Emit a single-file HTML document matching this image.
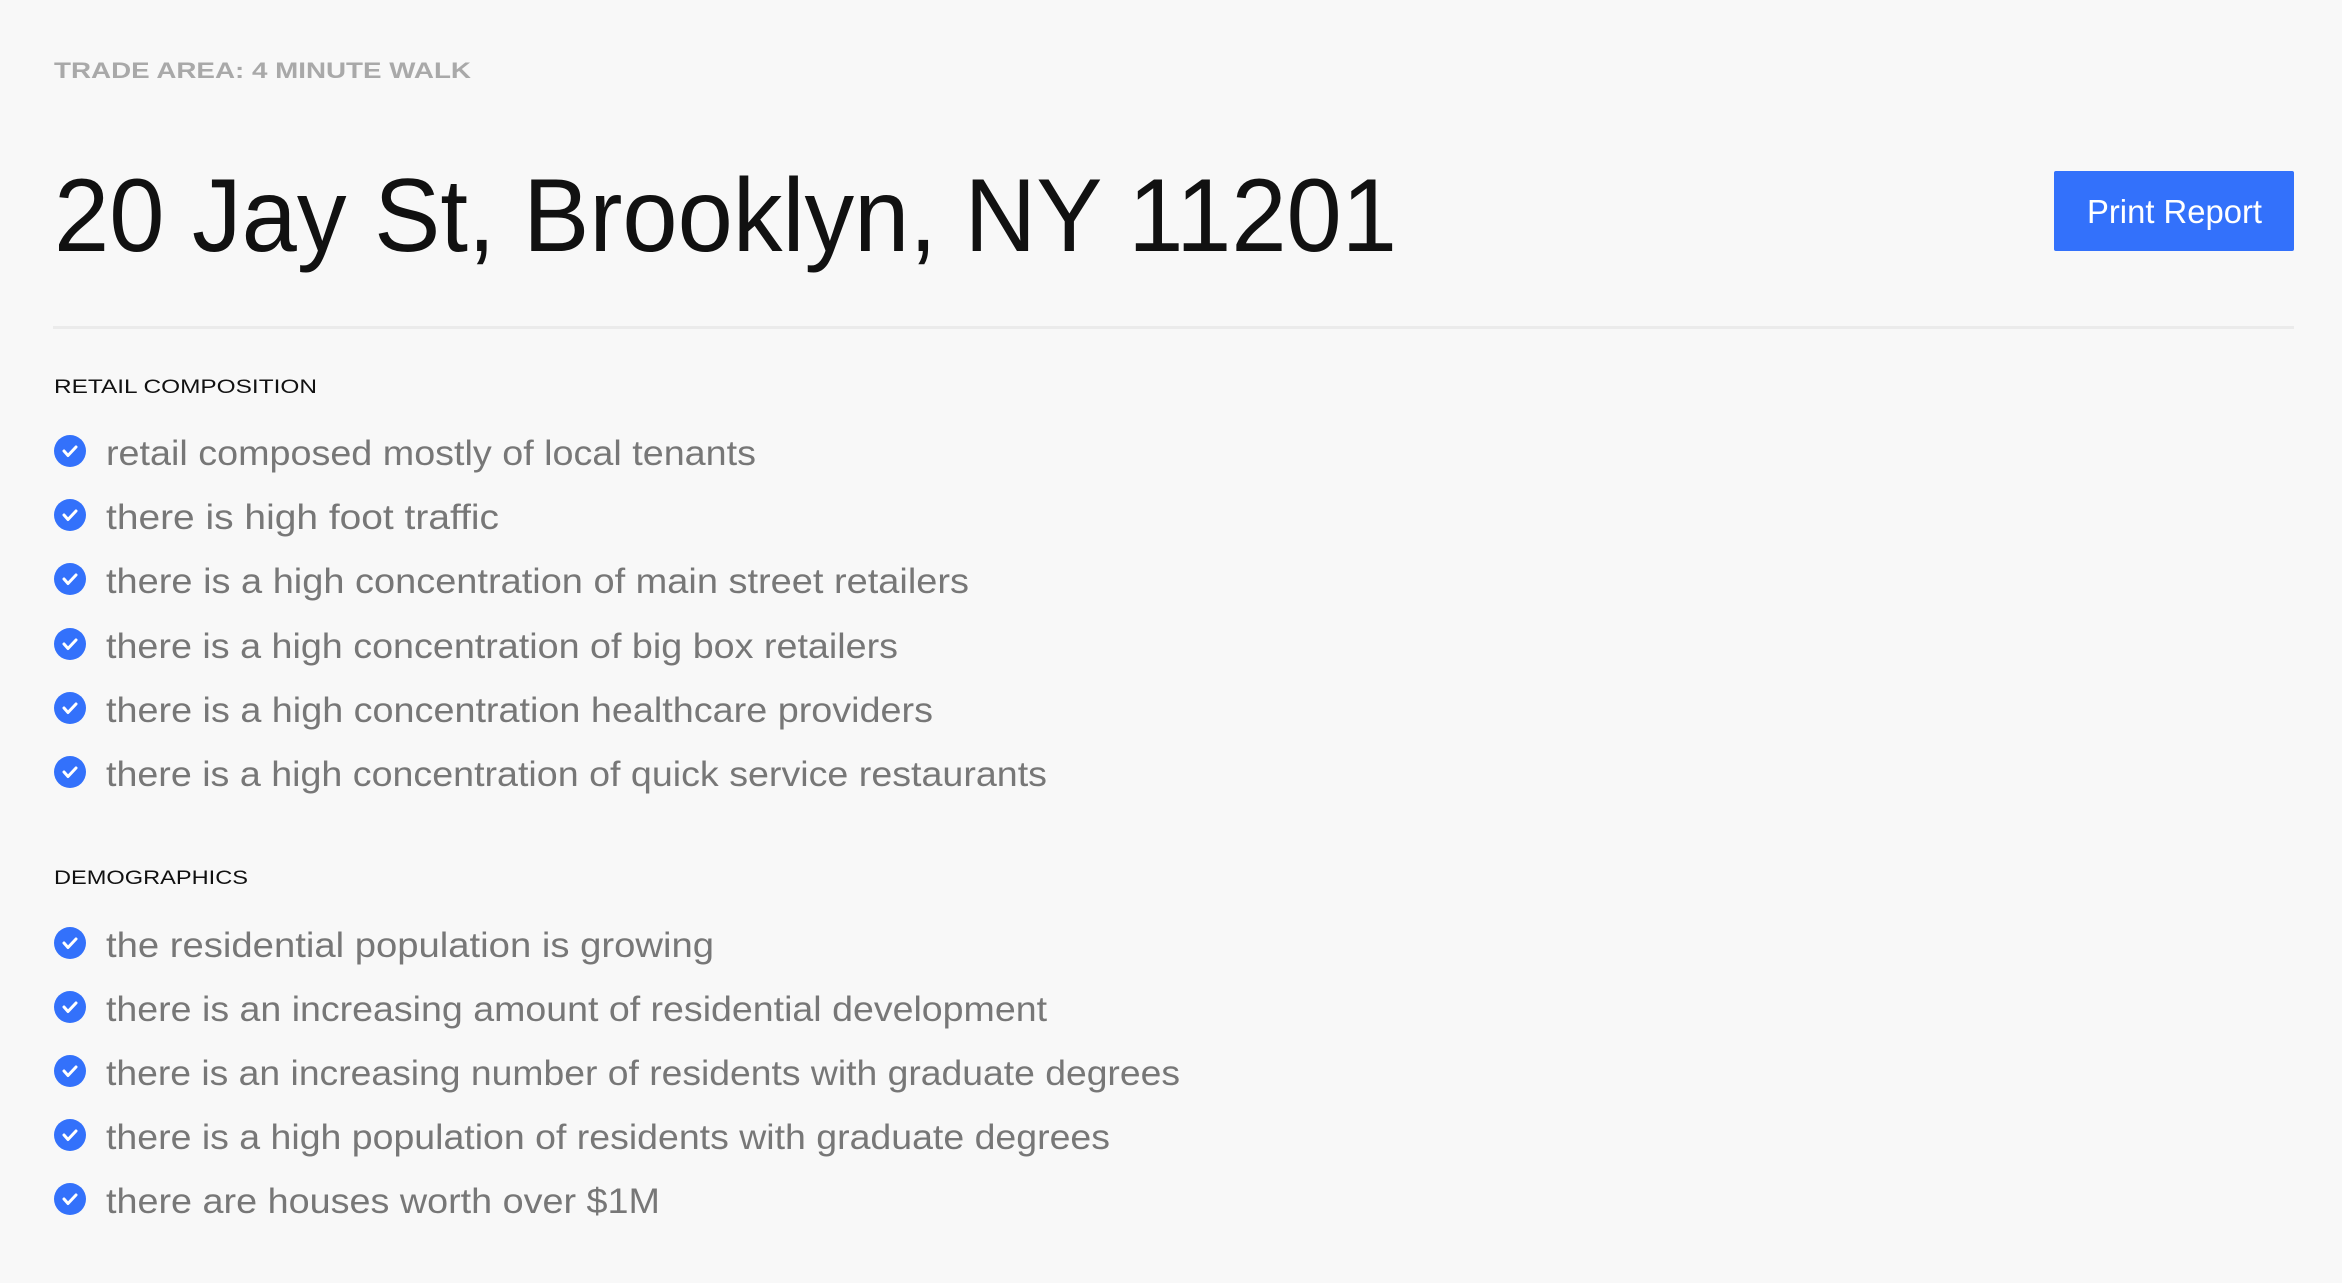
<!DOCTYPE html>
<html><head><meta charset="utf-8"><style>
html,body{margin:0;padding:0;background:#f8f8f8;width:2342px;height:1283px;overflow:hidden}
svg{display:block}
</style></head><body>
<svg width="2342" height="1283" viewBox="0 0 2342 1283" xmlns="http://www.w3.org/2000/svg" font-family="Liberation Sans, sans-serif">
<rect width="2342" height="1283" fill="#f8f8f8"/>
<text x="54" y="78" font-size="22" font-weight="bold" fill="#a9a9a9" textLength="417" lengthAdjust="spacingAndGlyphs">TRADE AREA: 4 MINUTE WALK</text>
<text x="54" y="251" font-size="104" fill="#111" textLength="1343" lengthAdjust="spacingAndGlyphs">20 Jay St, Brooklyn, NY 11201</text>
<rect x="2054" y="171" width="240" height="80" rx="2" fill="#3371fb"/>
<text x="2087" y="223" font-size="33" fill="#fff" textLength="175" lengthAdjust="spacingAndGlyphs">Print Report</text>
<rect x="53" y="326" width="2241" height="3" fill="#ebebeb"/>
<text x="54" y="393" font-size="19" fill="#111" textLength="263" lengthAdjust="spacingAndGlyphs">RETAIL COMPOSITION</text>
<text x="54" y="884" font-size="19" fill="#111" textLength="194" lengthAdjust="spacingAndGlyphs">DEMOGRAPHICS</text>
<defs><g id="c"><circle r="16" fill="#3371fb"/><path d="M-6 0 L-2 4.5 L6 -4" stroke="#fff" stroke-width="3" fill="none" stroke-linecap="round" stroke-linejoin="round"/></g></defs>
<g font-size="35" fill="#777">
<use href="#c" x="70" y="451"/><text x="106" y="465" textLength="650" lengthAdjust="spacingAndGlyphs">retail composed mostly of local tenants</text>
<use href="#c" x="70" y="515"/><text x="106" y="529" textLength="393" lengthAdjust="spacingAndGlyphs">there is high foot traffic</text>
<use href="#c" x="70" y="579"/><text x="106" y="593" textLength="863" lengthAdjust="spacingAndGlyphs">there is a high concentration of main street retailers</text>
<use href="#c" x="70" y="644"/><text x="106" y="658" textLength="792" lengthAdjust="spacingAndGlyphs">there is a high concentration of big box retailers</text>
<use href="#c" x="70" y="708"/><text x="106" y="722" textLength="827" lengthAdjust="spacingAndGlyphs">there is a high concentration healthcare providers</text>
<use href="#c" x="70" y="772"/><text x="106" y="786" textLength="941" lengthAdjust="spacingAndGlyphs">there is a high concentration of quick service restaurants</text>
<use href="#c" x="70" y="943"/><text x="106" y="957" textLength="608" lengthAdjust="spacingAndGlyphs">the residential population is growing</text>
<use href="#c" x="70" y="1007"/><text x="106" y="1021" textLength="941" lengthAdjust="spacingAndGlyphs">there is an increasing amount of residential development</text>
<use href="#c" x="70" y="1071"/><text x="106" y="1085" textLength="1074" lengthAdjust="spacingAndGlyphs">there is an increasing number of residents with graduate degrees</text>
<use href="#c" x="70" y="1135"/><text x="106" y="1149" textLength="1004" lengthAdjust="spacingAndGlyphs">there is a high population of residents with graduate degrees</text>
<use href="#c" x="70" y="1199"/><text x="106" y="1213" textLength="554" lengthAdjust="spacingAndGlyphs">there are houses worth over $1M</text>
</g>
</svg>
</body></html>
